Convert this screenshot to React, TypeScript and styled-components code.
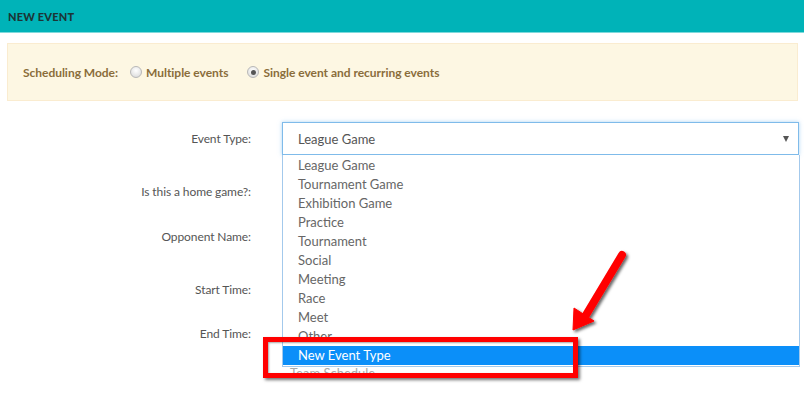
import * as React from 'react';
import styled, { createGlobalStyle } from 'styled-components';

const GlobalStyle = createGlobalStyle`
	body {
		margin: 0;
		background: #fff;
		font-family: Lato, "Open Sans", sans-serif;
	}
`;

const Page = styled.div`
	position: relative;
	width: 804px;
	height: 395px;
	overflow: hidden;
`;

const Header = styled.div`
	height: 32px;
	display: flex;
	align-items: center;
	padding-left: 8px;
	background: #00b3b8;
	border-bottom: 1px solid #7fd9db;
	color: #1c3536;
	font-size: 11px;
	font-weight: 900;
	letter-spacing: 0.2px;
`;

const Alert = styled.div`
	display: flex;
	align-items: center;
	gap: 11px;
	height: 56px;
	margin: 10px 6px 0 7px;
	padding-left: 15px;
	background: #fdf7e3;
	border: 1px solid #faecd0;
	color: #8a6d3b;
	font-size: 12px;
	font-weight: 700;
	letter-spacing: -0.03px;
`;

const ModeLabel = styled.span`
	margin-right: 1px;
`;

const RadioLabel = styled.label`
	display: flex;
	align-items: center;
	gap: 4px;
	margin-right: 8px;
`;

const Radio = styled.span<{ checked?: boolean }>`
	position: relative;
	display: inline-block;
	width: 10px;
	height: 10px;
	border-radius: 50%;
	border: 1px solid #b8b8b8;
	background: radial-gradient(circle at 50% 35%, #ffffff 0%, #e2e2e2 70%, #cfcfcf 100%);

	&::after {
		content: '';
		display: ${p => (p.checked ? 'block' : 'none')};
		position: absolute;
		left: 2.5px;
		top: 2.5px;
		width: 5px;
		height: 5px;
		border-radius: 50%;
		background: #555;
	}
`;

const Form = styled.div`
	display: flex;
	flex-direction: column;
	margin-top: 21px;
	padding-right: 5px;
`;

const Row = styled.div<{ top: number; h?: number }>`
	display: grid;
	grid-template-columns: 251px 1fr;
	column-gap: 31px;
	align-items: center;
	height: ${p => p.h ?? 34}px;
	margin-top: ${p => p.top}px;
`;

const Label = styled.div`
	text-align: right;
	color: #555;
	font-size: 12px;
	letter-spacing: -0.1px;
`;

const SelectWrap = styled.div`
	position: relative;
	height: 33px;
`;

const SelectBox = styled.div`
	box-sizing: border-box;
	height: 33px;
	display: flex;
	align-items: center;
	justify-content: space-between;
	padding: 0 9px 0 15px;
	border: 1px solid #7fbbea;
	box-shadow: 0 0 4px rgba(102, 175, 233, 0.55);
	color: #555;
	font-size: 13px;
`;

const Caret = styled.span`
	width: 0;
	height: 0;
	border-left: 3.5px solid transparent;
	border-right: 3.5px solid transparent;
	border-top: 6px solid #555;
`;

const List = styled.ul`
	position: absolute;
	top: 33px;
	left: 0;
	right: -1px;
	z-index: 2;
	box-sizing: border-box;
	height: 212px;
	margin: 0;
	padding: 1px 0 0;
	list-style: none;
	background: #fff;
	border: 1px solid #a3c9ec;
	border-top: none;
	overflow: hidden;
`;

const Option = styled.li<{ active?: boolean }>`
	height: 19px;
	line-height: 19px;
	padding-left: 15px;
	font-size: 13px;
	color: ${p => (p.active ? '#fff' : '#666')};
	background: ${p => (p.active ? '#0b8ff9' : 'transparent')};
`;

const Ghost = styled.div`
	padding-left: 8px;
	color: #aaa;
	font-size: 13px;
	transform: translateY(40px);
`;

const Callout = styled.div`
	position: absolute;
	left: 263px;
	top: 337px;
	width: 315px;
	height: 41px;
	box-sizing: border-box;
	border: 5px solid #ff0000;
	box-shadow: 2px 2px 3px rgba(0, 0, 0, 0.55), inset 1px 1px 2px rgba(0, 0, 0, 0.35);
	z-index: 3;
`;

const ArrowSvg = styled.svg`
	position: absolute;
	left: 560px;
	top: 245px;
	z-index: 3;
	overflow: visible;
`;

const options = [
	'League Game',
	'Tournament Game',
	'Exhibition Game',
	'Practice',
	'Tournament',
	'Social',
	'Meeting',
	'Race',
	'Meet',
	'Other',
	'New Event Type',
];

const App: React.FC = () => (
	<>
		<GlobalStyle />
		<Page>
			<Header>NEW EVENT</Header>
			<Alert>
				<ModeLabel>Scheduling Mode:</ModeLabel>
				<RadioLabel>
					<Radio />
					Multiple events
				</RadioLabel>
				<RadioLabel>
					<Radio checked />
					Single event and recurring events
				</RadioLabel>
			</Alert>
			<Form>
				<Row top={0} h={33}>
					<Label>Event Type:</Label>
					<SelectWrap>
						<SelectBox>
							League Game
							<Caret />
						</SelectBox>
						<List>
							{options.map(o => (
								<Option key={o} active={o === 'New Event Type'}>
									{o}
								</Option>
							))}
						</List>
					</SelectWrap>
				</Row>
				<Row top={19}>
					<Label>Is this a home game?:</Label>
					<div />
				</Row>
				<Row top={11}>
					<Label>Opponent Name:</Label>
					<div />
				</Row>
				<Row top={19}>
					<Label>Start Time:</Label>
					<div />
				</Row>
				<Row top={10}>
					<Label>End Time:</Label>
					<Ghost>Team Schedule</Ghost>
				</Row>
			</Form>
			<Callout />
			<ArrowSvg width="80" height="95" viewBox="0 0 80 95">
				<defs>
					<filter id="sh" x="-30%" y="-30%" width="160%" height="160%">
						<feDropShadow dx="2" dy="2" stdDeviation="1.5" floodColor="#000" floodOpacity="0.6" />
					</filter>
				</defs>
				<g filter="url(#sh)" fill="#ff0000" stroke="#ff0000">
					<line x1="62" y1="10" x2="26" y2="70" strokeWidth="8" strokeLinecap="round" />
					<polygon points="13,85 14,63 34,76" strokeWidth="1" strokeLinejoin="round" />
				</g>
			</ArrowSvg>
		</Page>
	</>
);

export default App;
